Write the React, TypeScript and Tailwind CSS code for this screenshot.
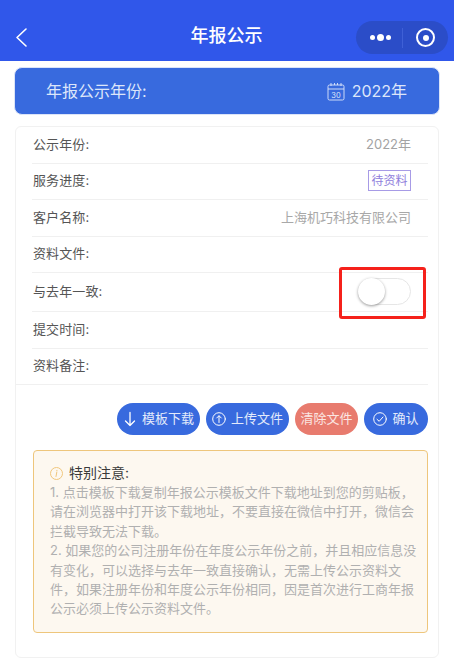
import React from "react";

const noteLines = [
  "1. 点击模板下载复制年报公示模板文件下载地址到您的剪贴板\uFF0C",
  "请在浏览器中打开该下载地址\uFF0C不要直接在微信中打开\uFF0C微信会",
  "拦截导致无法下载\u3002",
  "2. 如果您的公司注册年份在年度公示年份之前\uFF0C并且相应信息没",
  "有变化\uFF0C可以选择与去年一致直接确认\uFF0C无需上传公示资料文",
  "件\uFF0C如果注册年份和年度公示年份相同\uFF0C因是首次进行工商年报",
  "公示必须上传公示资料文件\u3002",
];

function Row({ label, children, h = "h-[36.5px]", last = false }: { label: string; children?: React.ReactNode; h?: string; last?: boolean }) {
  return (
    <div className={`${h} ${last ? "pl-[17px]" : "ml-[16px] pl-[1px]"} mr-[10px] flex items-center justify-between border-b border-[#f0f0f0] pr-[17px] pb-[1px] text-[13px]`}>
      <span className="text-[#555555] tracking-[0.1px]">{label}</span>
      {children}
    </div>
  );
}

export default function App() {
  return (
    <div className="relative w-[454px] h-[668px] overflow-hidden bg-white font-['Inter','Noto_Sans_CJK_SC',sans-serif]">
      <header className="relative h-[61px] bg-[#3057ea] flex items-end justify-center pb-[12px]">
        <svg className="absolute left-[14px] top-[27px]" width="14" height="21" viewBox="0 0 14 21" fill="none">
          <path d="M12 2 3 10.500 12 19" stroke="white" strokeWidth="1.600" strokeLinecap="round" strokeLinejoin="round" />
        </svg>
        <span className="text-white text-[18px] font-medium leading-[26px] mr-[1px]">年报公示</span>
        <div className="absolute left-[356px] top-[21px] w-[92px] h-[33px] rounded-full bg-[#2b4dc8] flex items-center">
          <div className="w-[46px] flex items-center justify-center gap-[2px] pl-[2px]">
            <span className="w-[5px] h-[5px] rounded-full bg-white" />
            <span className="w-[7px] h-[7px] rounded-full bg-white" />
            <span className="w-[5px] h-[5px] rounded-full bg-white" />
          </div>
          <div className="w-px h-[20px] bg-[#3f60d6]" />
          <div className="flex-1 flex items-center justify-center">
            <span className="w-[19px] h-[19px] rounded-full border-[2.5px] border-white flex items-center justify-center">
              <span className="w-[6px] h-[6px] rounded-full bg-white" />
            </span>
          </div>
        </div>
      </header>

      <div className="mt-[6px] mx-[14px] h-[48px] rounded-[8px] bg-[#386ade] border border-[#dbe4f8] flex items-center justify-between pl-[31px] pr-[32px] text-[16px] text-[#dde6fa]">
        <span>年报公示年份:</span>
        <div className="flex items-center gap-[7px]">
          <svg width="18" height="19" viewBox="0 0 18 19" fill="none" stroke="#dde6fa" strokeWidth="0.9">
            <rect x="1" y="3" width="16" height="15" rx="1.500" />
            <path d="M1 7h16M4 1v3M7.500 1v2M10.500 1v2M14 1v3" />
            <text x="9" y="15.500" fontSize="7.500" textAnchor="middle" fill="#dde6fa" stroke="none">30</text>
          </svg>
          <span>2022年</span>
        </div>
      </div>

      <div className="mt-[11px] mx-[15px] h-[532px] rounded-[6px] border border-[#f1f1f1] bg-white">
        <Row label="公示年份:">
          <span className="text-[#a3a3a3]">2022年</span>
        </Row>
        <Row label="服务进度:">
          <span className="w-[43px] text-center border border-[#a79be6] text-[#8f80dc] text-[12px] leading-[19px]">待资料</span>
        </Row>
        <Row label="客户名称:">
          <span className="text-[#a8a8a8]">上海机巧科技有限公司</span>
        </Row>
        <Row label="资料文件:" />
        <Row label="与去年一致:" h="h-[39px]">
          <span className="relative w-[53px] h-[27px] rounded-full border border-[#e6e6e6] bg-white">
            <span className="absolute left-[-1px] top-[-1px] w-[27px] h-[27px] rounded-full bg-white shadow-[0_1px_3px_rgba(0,0,0,0.4)]" />
          </span>
        </Row>
        <Row label="提交时间:" />
        <Row label="资料备注:" last />

        <div className="mt-[18px] pr-[10px] flex justify-end gap-[6px] text-white text-[13px]">
          <button className="h-[32px] w-[83px] rounded-full bg-[#386ade] flex items-center justify-center gap-[5px]">
            <svg width="14" height="16" viewBox="0 0 14 16" fill="none" stroke="white" strokeWidth="1.300" strokeLinecap="round" strokeLinejoin="round">
              <path d="M7 1.500v13M2.500 10 7 14.500 11.500 10" />
            </svg>
            <span className="text-[#e3eafb]">模板下载</span>
          </button>
          <button className="h-[32px] w-[83px] rounded-full bg-[#386ade] flex items-center justify-center gap-[5px]">
            <svg width="14" height="14" viewBox="0 0 14 14" fill="none" stroke="white" strokeWidth="1" strokeLinecap="round" strokeLinejoin="round">
              <circle cx="7" cy="7" r="6.300" />
              <path d="M7 10.500V4M4.700 6 7 3.700 9.300 6" />
            </svg>
            <span className="text-[#e3eafb]">上传文件</span>
          </button>
          <button className="h-[32px] w-[63px] rounded-full bg-[#e87b6e] flex items-center justify-center">
            <span className="text-[#fbe6e2]">清除文件</span>
          </button>
          <button className="h-[32px] w-[64px] rounded-full bg-[#386ade] flex items-center justify-center gap-[5px]">
            <svg width="14" height="14" viewBox="0 0 14 14" fill="none" stroke="white" strokeWidth="1" strokeLinecap="round" strokeLinejoin="round">
              <circle cx="7" cy="7" r="6.300" />
              <path d="M4 7.300 6.200 9.300 10 5" />
            </svg>
            <span className="text-[#e3eafb]">确认</span>
          </button>
        </div>

        <div className="mt-[15px] ml-[17px] mr-[10px] h-[183px] rounded-[4px] border border-[#eec67c] bg-[#fdf8f0] pl-[16px] pr-[8px] pt-[12px]">
          <div className="flex items-center gap-[6px] h-[20px]">
            <svg width="13" height="13" viewBox="0 0 13 13" fill="none" stroke="#f0c67c" strokeWidth="1">
              <circle cx="6.500" cy="6.500" r="6" />
              <path d="M6.800 5.200 6 9.500M6.900 3.300v.6" strokeLinecap="round" />
            </svg>
            <span className="text-[14px] text-[#3a3a3a] leading-[20px]">特别注意:</span>
          </div>
          <div className="text-[13px] leading-[19.4px] text-[#b0b0b0] whitespace-nowrap">
            {noteLines.map((line) => (
              <div key={line}>{line}</div>
            ))}
          </div>
        </div>
      </div>

      <div className="absolute left-[339px] top-[267px] w-[87px] h-[52px] rounded-[3px] border-[3px] border-[#f5211b]" />
    </div>
  );
}
